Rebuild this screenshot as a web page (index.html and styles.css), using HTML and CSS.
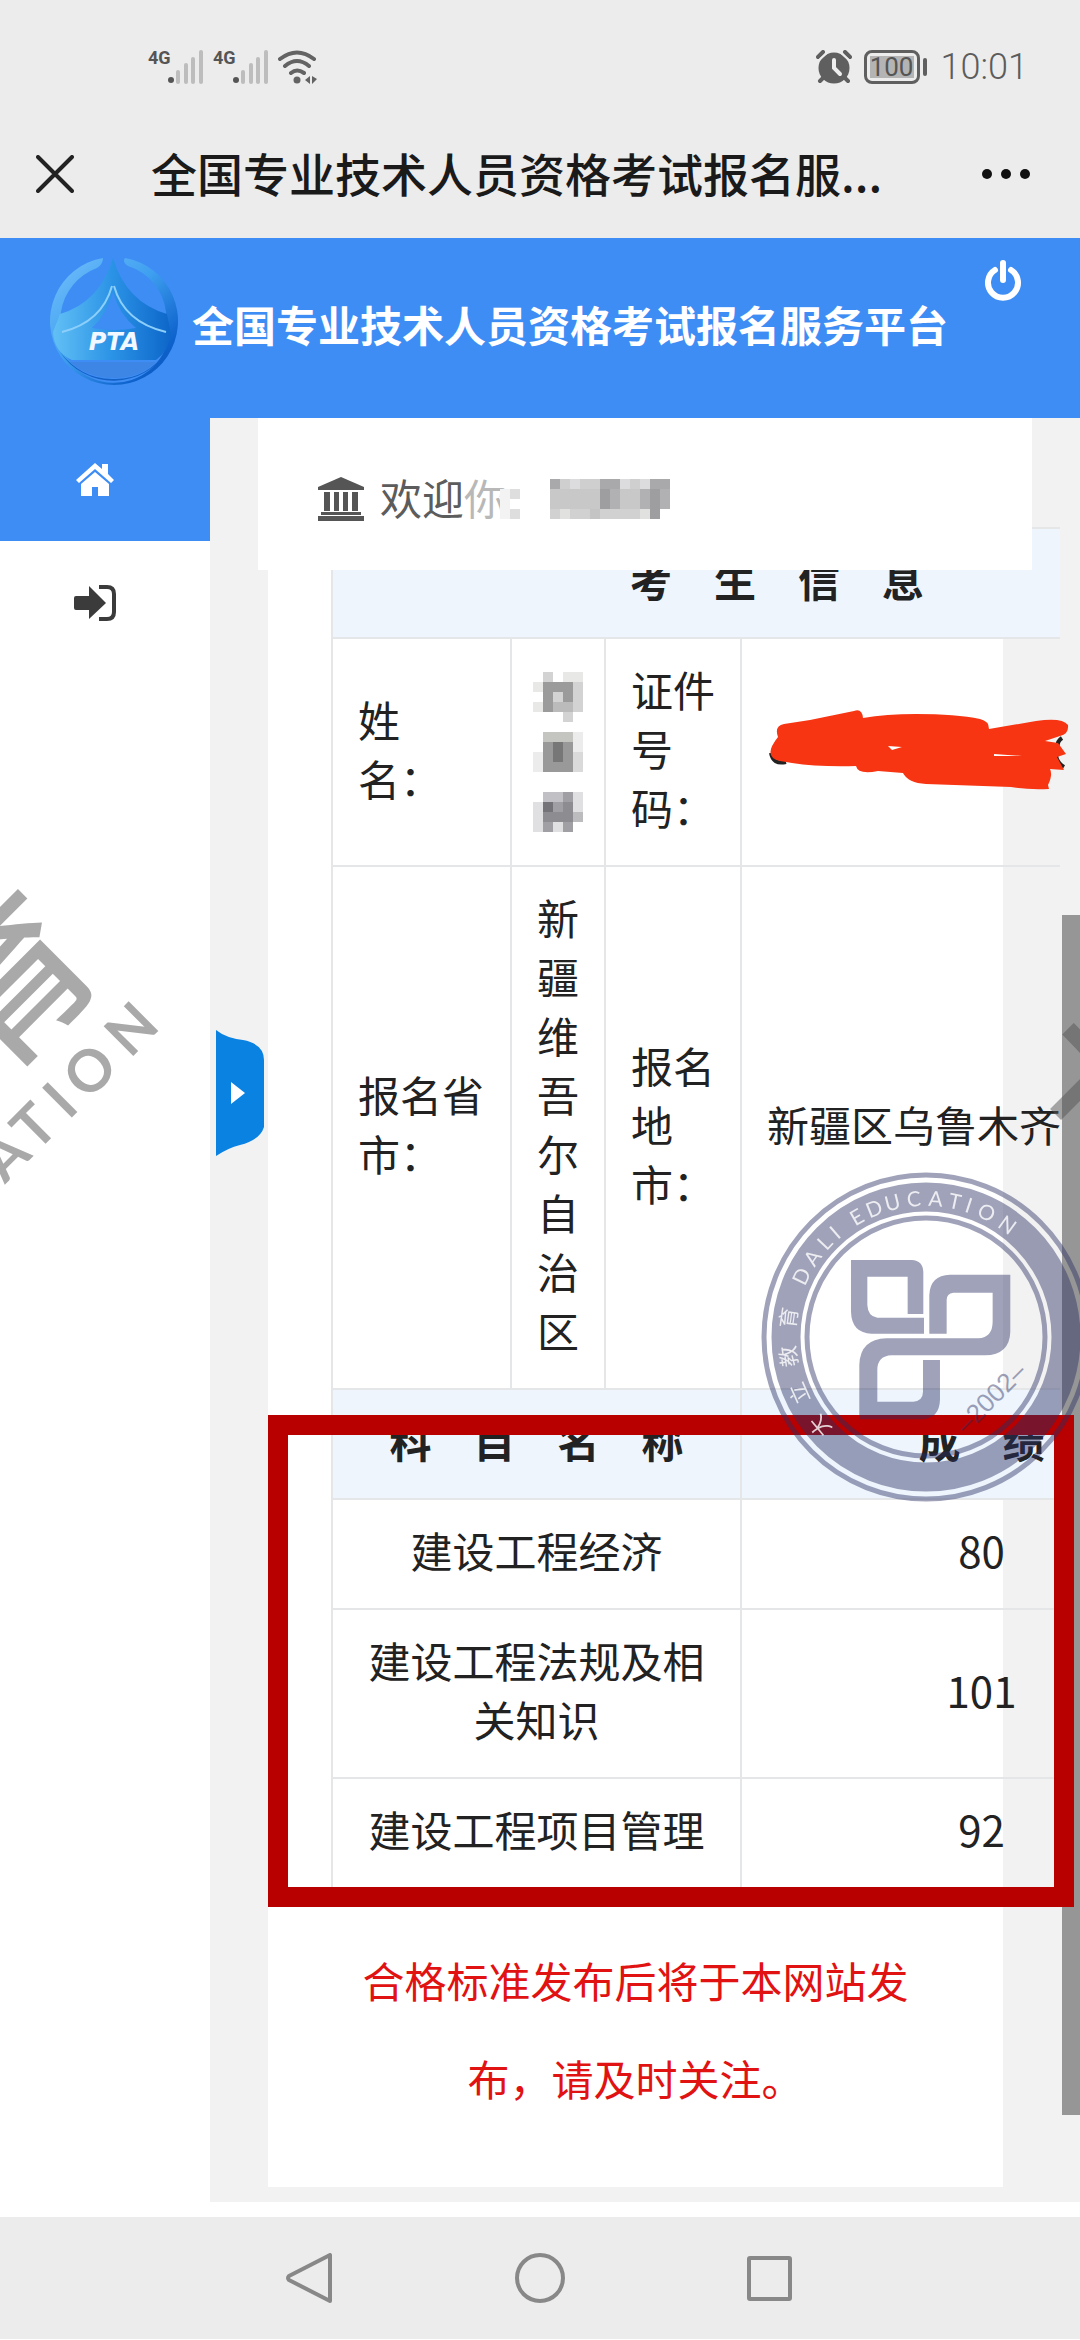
FILE: index.html
```html
<!DOCTYPE html>
<html lang="zh-CN">
<head>
<meta charset="utf-8">
<meta name="viewport" content="width=device-width, initial-scale=1">
<title>全国专业技术人员资格考试报名服务平台</title>
<link rel="stylesheet" href="styles.css">
</head>
<body>
<div class="status">
  <div class="status-group">
    <span class="net">4G</span>
    <svg class="bars" viewBox="0 0 36 34"><circle cx="3" cy="30" r="3" fill="#555"/><path d="M10 22v10M18 15v17M25 9v23M33 2v30" stroke="#bdbdbd" stroke-width="4" stroke-linecap="round"/></svg>
    <span class="net">4G</span>
    <svg class="bars" viewBox="0 0 36 34"><circle cx="3" cy="30" r="3" fill="#555"/><path d="M10 22v10M18 15v17M25 9v23M33 2v30" stroke="#bdbdbd" stroke-width="4" stroke-linecap="round"/></svg>
    <svg class="wifi" viewBox="0 0 40 34" fill="none" stroke="#636363" stroke-width="4" stroke-linecap="round"><path d="M2 9Q19-4 36 9M7 16Q19 6 31 16M13 23Q19 18 26 23"/><circle cx="19" cy="30" r="3.5" fill="#636363" stroke="none"/><path d="M32 26v8l-5-4zM34 26v8l5-5z" fill="#636363" stroke="none"/></svg>
  </div>
  <div class="status-group">
    <svg class="alarm" viewBox="0 0 36 34" fill="#5f5f5f"><circle cx="18" cy="18" r="15.5"/><path d="M2 7l5-5M29 2l5 5M4 31l5-5M32 31l-5-5" stroke="#5f5f5f" stroke-width="4" stroke-linecap="round"/><path d="M1 12L12 2M35 12L24 2" stroke="#ececec" stroke-width="2"/><path d="M18 10v8l6 6" stroke="#eee" stroke-width="4" fill="none" stroke-linecap="round"/></svg>
    <span class="battery"><span class="battery-fill">100</span></span>
    <span class="clock">10:01</span>
  </div>
</div>

<div class="titlebar">
  <button class="icon-btn" aria-label="关闭"><svg width="38" height="38" viewBox="0 0 38 38"><path d="M2 2l34 34M36 2L2 36" stroke="#222" stroke-width="4" stroke-linecap="round"/></svg></button>
  <div class="page-title">全国专业技术人员资格考试报名服...</div>
  <button class="icon-btn" aria-label="更多"><svg width="50" height="12" viewBox="0 0 50 12" fill="#111"><circle cx="6" cy="6" r="5"/><circle cx="25" cy="6" r="5"/><circle cx="44" cy="6" r="5"/></svg></button>
</div>

<header class="banner">
  <svg class="logo" viewBox="0 0 130 130">
    <defs>
      <linearGradient id="ring" x1="0" y1="0" x2="1" y2="1"><stop offset="0" stop-color="#74c0fb"/><stop offset=".45" stop-color="#3fa0f0"/><stop offset=".8" stop-color="#0e62cc"/><stop offset="1" stop-color="#0a4fb4"/></linearGradient>
      <linearGradient id="core" x1="0" y1="0" x2="1" y2="0"><stop offset="0" stop-color="#62c0f5"/><stop offset=".5" stop-color="#2b93e6"/><stop offset="1" stop-color="#0d66c9"/></linearGradient>
    </defs>
    <path fill-rule="evenodd" fill="url(#ring)" d="M55 2A64 64 0 1 0 77 2Q74 6 80 10A55 55 0 0 1 118 56L121 80A56 56 0 0 1 10 76L13 56A56 56 0 0 1 49 12Q55 8 55 2Z"/>
    <path d="M12 58Q52 46 65 2Q78 46 119 58L123 78Q120 96 108 104H24Q6 96 5 76Z" fill="url(#core)"/>
    <path d="M44 72Q59 58 65 36Q71 58 88 72Q66 76 44 72Z" fill="#3d8df5"/>
    <path d="M14 76Q54 66 64 30M118 76Q76 66 66 30" fill="none" stroke="#8ccffb" stroke-width="2"/>
    <path d="M22 106H108Q92 122 66 122Q40 122 22 106Z" fill="#3d86e6"/>
    <path d="M12 96A64 64 0 0 0 120 94Q98 124 66 123Q34 124 12 96Z" fill="#1460c4"/>
    <text x="66" y="94" class="logo-text">PTA</text>
  </svg>
  <h1 class="banner-title">全国专业技术人员资格考试报名服务平台</h1>
  <button class="power" aria-label="退出登录"><svg width="38" height="42" viewBox="0 0 38 42" fill="none" stroke="#fff" stroke-width="6" stroke-linecap="round"><path d="M19 3v17M11 10a15 15 0 1 0 16 0"/></svg></button>
</header>

<div class="layout">
  <nav class="sidebar">
    <a class="side-link active" href="#home" aria-label="首页"><svg width="38" height="34" viewBox="0 0 38 34" fill="#fff"><path d="M19 0L0 17l3 3L19 6l16 14 3-3-6-6V1h-6v5z"/><path d="M19 9L5 21v12h11v-9h6v9h11V21z"/></svg></a>
    <a class="side-link" href="#exit" aria-label="进入"><svg width="42" height="36" viewBox="0 0 42 36"><path d="M2 11h13V1l17 17-17 16V25H2q-2 0-2-2V13q0-2 2-2z" fill="#3b3b3b"/><path d="M25 2h8q7 0 7 7v18q0 7-7 7h-8" fill="none" stroke="#3b3b3b" stroke-width="4"/></svg></a>
  </nav>

  <main class="content">
    <section class="welcome">
      <svg width="46" height="44" viewBox="0 0 46 44" fill="#555"><path d="M23 0L46 10v3H0v-3z"/><path d="M6 15h6v19H6zM16 15h5v19h-5zM25 15h5v19h-5zM34 15h6v19h-6zM3 35h40v3H3zM0 39h46v5H0z"/></svg>
      <span class="hello">欢迎<span class="faded">你</span></span>
      <svg class="mosaic" width="190" height="40" viewBox="0 0 19 4" shape-rendering="crispEdges">
        <path d="M3 1h1v1H3zM3 3h1v1H3z" fill="#dedede"/><path d="M2 1h1v2H2zM2 3h1v1H2z" fill="#f3f3f3"/>
        <path d="M7 0h1v1H7zM12 0h2v1h-2zM17 0h2v1h-2z" fill="#a9a9ab"/>
        <path d="M8 0h1v1H8zM10 0h2v1h-2zM15 0h1v1h-1z" fill="#cfcfcf"/><path d="M9 0h1v1H9zM14 0h1v1h-1zM16 0h1v1h-1z" fill="#dcdcdf"/>
        <path d="M7 1h5v2H7zM14 1h2v2h-2z" fill="#c8c8c9"/><path d="M12 1h1v2h-1zM17 1h1v3h-1z" fill="#9e9ea0"/><path d="M13 1h1v2h-1zM16 1h1v2h-1zM18 1h1v2h-1z" fill="#b1b1b3"/>
        <path d="M7 3h1v1H7zM9 3h2v1H9zM12 3h4v1h-4z" fill="#d1d1d1"/><path d="M8 3h1v1H8zM16 3h1v1h-1z" fill="#e1e1df"/><path d="M11 3h1v1h-1z" fill="#c4c4c4"/>
      </svg>
    </section>

    <section class="panel">
      <div class="results">
        <div class="table-wrap">
          <table class="scores">
            <colgroup><col class="c1"><col class="c2"><col class="c3"><col></colgroup>
            <tbody>
              <tr><th colspan="4">考　生　信　息</th></tr>
              <tr>
                <td>姓<br>名：</td>
                <td class="masked"><svg width="50" height="160" viewBox="0 0 5 16" shape-rendering="crispEdges">
                  <path d="M1 0h1v1H1zM4 1h1v3H4zM2 2h1v1H2zM3 4h1v1H3z" fill="#d3d3d3"/><path d="M3 0h2v1H3zM0 1h1v1H0zM0 3h1v1H0z" fill="#e8e8e6"/><path d="M1 1h1v3H1zM2 1h1v1H2zM3 1h1v2H3z" fill="#9b9b9b"/><path d="M2 3h2v1H2z" fill="#bbb"/>
                  <path d="M1 6h3v1H1z" fill="#c4c4c0"/><path d="M1 7h3v3H1z" fill="#999"/><path d="M2 7h1v2H2z" fill="#777"/><path d="M0 8h1v2H0zM4 6h1v2H4z" fill="#ececec"/><path d="M4 8h1v2H4z" fill="#dadada"/>
                  <path d="M1 12h2v1H1z" fill="#c1c1c5"/><path d="M3 12h1v1H3zM1 15h1v1H1zM3 15h1v1H3zM2 13h1v1H2z" fill="#a0a0a4"/><path d="M1 13h1v1H1z" fill="#747478"/><path d="M1 14h3v1H1zM3 13h1v1H3z" fill="#8c8c91"/><path d="M0 13h1v3H0zM4 12h1v2H4zM2 15h1v1H2z" fill="#e0e0e3"/><path d="M4 14h1v1H4z" fill="#bcbcbe"/>
                </svg></td>
                <td>证件号码：</td>
                <td></td>
              </tr>
              <tr>
                <td>报名省市：</td>
                <td>新疆维吾尔自治区</td>
                <td>报名地市：</td>
                <td class="nowrap">新疆区乌鲁木齐</td>
              </tr>
              <tr><th colspan="3">科　目　名　称</th><th>成　绩</th></tr>
              <tr class="subject"><td colspan="3">建设工程经济</td><td>80</td></tr>
              <tr class="subject"><td colspan="3">建设工程法规及相关知识</td><td>101</td></tr>
              <tr class="subject"><td colspan="3">建设工程项目管理</td><td>92</td></tr>
            </tbody>
          </table>
        </div>
        <div class="frame"></div>
        <svg class="scribble" width="306" height="84" viewBox="0 0 306 84">
          <path d="M5 44q2 12 15 9M296 29q-6 4-4 12M290 46q1 8 8 12" fill="none" stroke="#222" stroke-width="4"/>
          <path d="M12 28Q8 17 18 15L44 11L88 2Q96-1 97 9Q120 5 150 5Q190 5 214 10Q223 12 223 20L270 12Q296 8 302 16Q303 25 294 27L279 32L292 34L300 45L291 48L298 61L284 60Q287 66 282 76L283 80Q262 81 245 78L160 75Q142 74 137 64L112 62Q92 66 90 57Q52 58 26 54L14 52Q-4 48 12 28Z" fill="#f73512"/>
          <path d="M122 37l14 1-10 3zM228 45l28 2-28 0z" fill="#fff"/>
        </svg>
      </div>
      <p class="notice">合格标准发布后将于本网站发布，请及时关注。</p>
    </section>

    <button class="drawer" aria-label="展开"><svg width="48" height="126" viewBox="0 0 48 126"><path d="M0 0Q10 8 27 10Q48 14 48 30V97Q44 110 24 115Q12 118 0 126Z" fill="#0a82e2"/><path d="M15 52v22l14-11z" fill="#fff"/></svg></button>
  </main>
  <div class="scrollbar"></div>
</div>

<nav class="sysnav">
  <button class="icon-btn" aria-label="返回"><svg width="50" height="50" viewBox="0 0 50 50"><path d="M45 2v46L4 27q-2-2 0-4z" fill="none" stroke="#888" stroke-width="4" stroke-linejoin="round"/></svg></button>
  <button class="icon-btn" aria-label="主页"><svg width="50" height="50" viewBox="0 0 50 50"><circle cx="25" cy="25" r="23" fill="none" stroke="#888" stroke-width="4"/></svg></button>
  <button class="icon-btn" aria-label="任务"><svg width="50" height="50" viewBox="0 0 50 50"><rect x="4" y="5" width="41" height="41" rx="1" fill="none" stroke="#888" stroke-width="4"/></svg></button>
</nav>

<svg class="mark-left" width="170" height="380" viewBox="0 850 170 380">
  <g transform="rotate(-45)">
    <text class="mark-zh" x="-765" y="760">育</text>
    <text class="mark-en" x="-834 -790 -744 -717 -657" y="841">ATION</text>
  </g>
</svg>
<svg class="mark-right" width="40" height="160" viewBox="1040 1000 40 160">
  <g transform="rotate(-45)"><text class="mark-zh" x="-51" y="1616">大</text></g>
</svg>
<svg class="seal" width="320" height="332" viewBox="-166 -166 320 332">
  <g class="seal-ink">
    <circle r="162" fill="none" stroke-width="5"/>
    <circle r="140" fill="none" stroke-width="29"/>
    <circle r="119" fill="none" stroke-width="5"/>
    <path stroke="none" transform="translate(-186 -187) scale(.3333)" d="M333 330H515Q550 332 550 368V492H503V380H382V465Q384 500 412 503H552V551H395Q335 549 333 485ZM568 551V435Q570 376 630 374H811V545Q809 614 735 616H455Q412 618 412 660V755H520Q549 752 549 725V630H600V750Q598 806 545 808H358V645Q360 567 440 565H715Q758 562 758 515V428H640Q620 430 620 450V551Z"/>
    <text class="year" transform="translate(64 60) rotate(-45)" y="10">–2002–</text>
  </g>
  <g class="seal-text">
    <text y="-131" transform="rotate(-64)">D</text><text y="-131" transform="rotate(-55)">A</text><text y="-131" transform="rotate(-47)">L</text><text y="-131" transform="rotate(-41)">I</text>
    <text y="-131" transform="rotate(-30)">E</text><text y="-131" transform="rotate(-22)">D</text><text y="-131" transform="rotate(-14)">U</text><text y="-131" transform="rotate(-5)">C</text><text y="-131" transform="rotate(4)">A</text><text y="-131" transform="rotate(12)">T</text><text y="-131" transform="rotate(18)">I</text><text y="-131" transform="rotate(26)">O</text><text y="-131" transform="rotate(36)">N</text>
    <text y="-131" transform="rotate(-130)">大</text><text y="-131" transform="rotate(-114)">立</text><text y="-131" transform="rotate(-98)">教</text><text y="-131" transform="rotate(-82)">育</text>
  </g>
</svg>
</body>
</html>
```

FILE: styles.css
```css
* { box-sizing: border-box; }

body {
  position: relative;
  margin: 0;
  min-height: 100vh;
  overflow-x: hidden;
  background: #fff;
  color: #222;
  font-family: "Noto Sans CJK SC", sans-serif;
  font-size: 42px;
}

svg { display: block; flex: none; }

button {
  display: block;
  padding: 0;
  border: 0;
  background: none;
}

/* phone chrome */
.status {
  display: flex;
  justify-content: space-between;
  height: 110px;
  padding: 24px 52px 0 148px;
  background: #ececec;
}

.status-group { display: flex; align-items: center; }

.net {
  align-self: flex-start;
  width: 20px;
  margin-top: 22px;
  color: #555;
  font: bold 18px/24px "Liberation Sans Narrow", "Roboto", sans-serif;
}

.bars { width: 36px; height: 34px; margin-right: 9px; }
.wifi { width: 40px; height: 34px; }
.alarm { width: 36px; height: 34px; margin-right: 12px; }

.battery {
  position: relative;
  width: 56px;
  height: 34px;
  margin-right: 21px;
  padding: 3px;
  border: 3px solid #5f5f5f;
  border-radius: 8px;
}

.battery::after {
  content: "";
  position: absolute;
  top: 5px;
  right: -10px;
  width: 4px;
  height: 18px;
  border-radius: 2px;
  background: #5f5f5f;
}

.battery-fill {
  display: flex;
  justify-content: center;
  background: #b4b4b4;
  color: #555;
  font: 26px/22px "Roboto", sans-serif;
}

.clock { color: #5c5c5c; font: 300 36px/36px "Roboto", sans-serif; }

.titlebar {
  display: flex;
  align-items: center;
  height: 128px;
  padding: 0 49px 0 36px;
  background: #ececec;
}

.page-title {
  flex: 1;
  margin: 0 0 4px 77px;
  color: #1a1a1a;
  font-size: 46px;
  font-weight: 500;
  line-height: 64px;
}

/* site header */
.banner {
  display: flex;
  align-items: flex-start;
  height: 180px;
  padding: 18px 58px 0 48px;
  background: #3d8df5;
}

.logo { width: 130px; height: 130px; }

.logo-text {
  fill: #f2f8ff;
  font: italic bold 24px "DejaVu Sans", sans-serif;
  text-anchor: middle;
}

.banner-title {
  flex: 1;
  margin: 38px 0 0 14px;
  color: #fff;
  font-size: 42px;
  font-weight: 700;
  line-height: 60px;
  white-space: nowrap;
}

.power { margin-top: 4px; }

/* page body */
.layout {
  position: relative;
  display: flex;
  padding-bottom: 15px;
}

.sidebar { width: 210px; background: #fff; }

.side-link {
  display: flex;
  align-items: center;
  justify-content: center;
  height: 123px;
  padding-right: 20px;
}

.active { background: #3d8df5; }

.content {
  position: relative;
  z-index: 1;
  flex: 1;
  min-width: 0;
  padding-bottom: 15px;
  background: #f2f2f3;
}

.welcome {
  position: relative;
  z-index: 1;
  display: flex;
  align-items: center;
  height: 152px;
  margin: 0 48px;
  padding: 10px 60px 0;
  background: #fff;
}

.hello { margin: 0 0 4px 16px; color: #5c5c5c; line-height: 60px; }
.faded { color: #b8b8b8; }
.mosaic { margin-left: -26px; }

.panel {
  margin: -43px 77px 0 58px;
  padding-bottom: 60px;
  background: #fff;
}

.results { position: relative; }

.table-wrap {
  margin: 0 -57px 0 63px;
  overflow: hidden;
}

.scores {
  width: 892px;
  border-collapse: collapse;
  table-layout: fixed;
  line-height: 59px;
}

.c1 { width: 179px; }
.c2 { width: 94px; }
.c3 { width: 136px; }

.scores th,
.scores td {
  padding: 20px 25px 29px;
  border: 2px solid #e4e6e8;
  text-align: left;
}

.scores th { background: #eef5fd; text-align: center; }
.scores .subject td { text-align: center; }
.scores .masked { padding: 0 21px; }
.nowrap { white-space: nowrap; }

.frame {
  position: absolute;
  top: 888px;
  left: 0;
  right: -71px;
  height: 492px;
  border: 20px solid #b90000;
}

.scribble { position: absolute; top: 182px; left: 498px; }

.notice {
  margin: 42px 0 0;
  padding: 0 80px;
  color: #e11212;
  line-height: 98px;
  text-align: center;
}

.drawer { position: absolute; top: 612px; left: 6px; }

.scrollbar {
  position: absolute;
  top: 497px;
  right: 0;
  bottom: 102px;
  width: 18px;
  background: #969696;
}

/* content paints over the page background but under its own marked frame */
.scrollbar { z-index: 1; }
.results { z-index: 2; }
.content { z-index: auto; }

.sysnav {
  display: flex;
  align-items: center;
  justify-content: center;
  gap: 180px;
  height: 122px;
  background: #ececec;
}

/* watermarks lying over the page */
.mark-left, .mark-right, .seal { position: absolute; z-index: 3; pointer-events: none; }
.mark-left { top: 850px; left: 0; }
.mark-right { top: 1000px; right: 0; }
.seal { top: 1171px; right: 0; }
.welcome { z-index: 3; }

.mark-zh, .mark-en { fill: rgba(86, 84, 84, .5); }
.mark-zh { font-size: 158px; font-weight: 500; }
.mark-en { font: bold 58px "Lato", sans-serif; }

.seal-ink { fill: #272e62; stroke: #272e62; opacity: .44; }
.year { font: 26px "Liberation Sans", sans-serif; stroke: none; text-anchor: middle; }
.seal-text { fill: #fff; opacity: .8; font: 21px "Lato", "Noto Sans CJK SC", sans-serif; text-anchor: middle; }
```
